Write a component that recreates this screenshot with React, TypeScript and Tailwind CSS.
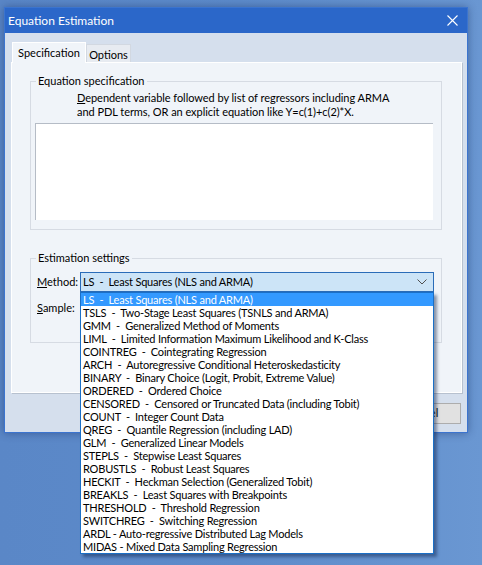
import React from "react";

const methods = [
  "LS  -  Least Squares (NLS and ARMA)",
  "TSLS  -  Two-Stage Least Squares (TSNLS and ARMA)",
  "GMM  -  Generalized Method of Moments",
  "LIML  -  Limited Information Maximum Likelihood and K-Class",
  "COINTREG  -  Cointegrating Regression",
  "ARCH  -  Autoregressive Conditional Heteroskedasticity",
  "BINARY  -  Binary Choice (Logit, Probit, Extreme Value)",
  "ORDERED  -  Ordered Choice",
  "CENSORED  -  Censored or Truncated Data (including Tobit)",
  "COUNT  -  Integer Count Data",
  "QREG  -  Quantile Regression (including LAD)",
  "GLM  -  Generalized Linear Models",
  "STEPLS  -  Stepwise Least Squares",
  "ROBUSTLS  -  Robust Least Squares",
  "HECKIT  -  Heckman Selection (Generalized Tobit)",
  "BREAKLS  -  Least Squares with Breakpoints",
  "THRESHOLD  -  Threshold Regression",
  "SWITCHREG  -  Switching Regression",
  "ARDL - Auto-regressive Distributed Lag Models",
  "MIDAS - Mixed Data Sampling Regression",
];

export default function App() {
  return (
    <div
      className="w-[482px] h-[565px] overflow-hidden bg-gradient-to-r from-[#5a87c7] via-[#5d8bca] to-[#6a97d2] pt-[7px] pl-[4px] text-[11px] text-black"
      style={{ fontFamily: 'Lato, "Liberation Sans", sans-serif' }}
    >
      {/* dialog window */}
      <div className="w-[464px] border border-[#3b74cf] bg-[#d5dfed] shadow-[0_0_8px_rgba(20,40,90,0.45)]">
        <div className="h-[25px] bg-[#2b67c9] flex items-center justify-between pl-[3px] pr-[9px]">
          <span className="text-white text-[12px]">Equation Estimation</span>
          <svg width="11" height="11" viewBox="0 0 11 11">
            <path d="M0.5 0.5L10.5 10.5M10.5 0.5L0.5 10.5" stroke="#fff" strokeWidth="1.1" />
          </svg>
        </div>

        <div className="pt-[9px] pl-[6px] pr-[5px] pb-[8px]">
          {/* tabs */}
          <div className="flex items-end h-[20px] pl-[1px]">
            <div className="relative z-[1] w-[74px] h-[21px] -mb-[1px] pt-[2px] text-center bg-[#f0f4f9] border border-b-0 border-white">
              Specification
            </div>
            <div className="w-[45px] h-[18px] pt-[2px] text-center bg-[#e7ebf1] border border-b-0 border-[#d2d8e1]">Options</div>
          </div>

          {/* tab panel */}
          <div className="h-[331px] w-[451px] bg-[#f0f4f9] border border-white shadow-[1px_1px_0_#b7c1cf] pt-[11px] pl-[18px] pr-[19px]">
            <fieldset className="border border-[#d6dbe3] pl-[4px] pr-[8px] pb-[9px]">
              <legend className="ml-[1px] px-[2px] leading-[14px]">Equation specification</legend>
              <div className="pt-[3px] pl-[42px] leading-[14px] tracking-[-0.05px]">
                <span className="underline">D</span>ependent variable followed by list of regressors including ARMA
                <br />
                and PDL terms, OR an explicit equation like Y=c(1)+c(2)*X.
              </div>
              <div className="mt-[4px] h-[97px] bg-white border-t border-l border-[#b5bcc6]" />
            </fieldset>

            <fieldset className="mt-[21px] border border-[#d6dbe3] pl-[4px] pr-[7px] pb-[24px]">
              <legend className="ml-[1px] px-[2px] leading-[14px]">Estimation settings</legend>
              <div className="mt-[7px] pl-[2px] flex items-center">
                <span className="w-[43px]">
                  <span className="underline">M</span>ethod:
                </span>
                <div className="relative flex-1">
                  <div className="h-[20px] bg-[#cce4f7] border border-[#2a6cb8] flex items-center justify-between pl-[2px] pr-[6px]">
                    <span className="whitespace-pre tracking-[-0.2px]">LS  -  Least Squares (NLS and ARMA)</span>
                    <svg width="10" height="6" viewBox="0 0 10 6">
                      <path d="M0.5 0.5L5 5L9.5 0.5" fill="none" stroke="#505050" strokeWidth="1" />
                    </svg>
                  </div>
                  {/* open dropdown list */}
                  <div className="absolute top-full left-0 w-full z-10 bg-white border border-[#1b6fc6] shadow-[3px_3px_3px_rgba(10,30,70,0.45)]">
                    {methods.map((m, i) => (
                      <div
                        key={m}
                        className={`h-[13px] leading-[13px] pl-[2px] whitespace-pre tracking-[-0.2px] ${i === 0 ? "bg-[#3399ff] text-white" : ""}`}
                      >
                        {m}
                      </div>
                    ))}
                  </div>
                </div>
              </div>
              <div className="mt-[6px] pl-[2px] h-[20px] flex items-center">
                <span>
                  <span className="underline">S</span>ample:
                </span>
              </div>
            </fieldset>
          </div>

          {/* buttons */}
          <div className="mt-[10px] flex justify-end gap-[5px] pr-[1px]">
            <button className="w-[78px] h-[21px] bg-[#e1e1e1] border border-[#adadad]">OK</button>
            <button className="w-[78px] h-[21px] bg-[#e1e1e1] border border-[#adadad]">Cancel</button>
          </div>
        </div>
      </div>
    </div>
  );
}
